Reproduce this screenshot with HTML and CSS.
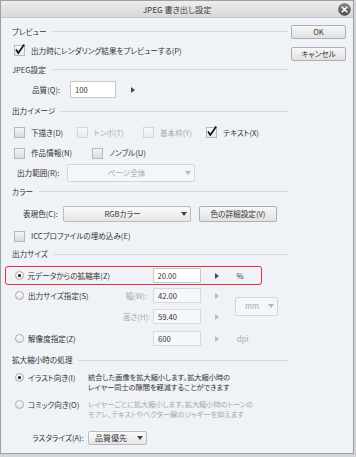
FILE: index.html
```html
<!DOCTYPE html>
<html lang="ja">
    <head>
        <meta charset="UTF-8" />
        <meta name="viewport" content="width=device-width, initial-scale=1.0" />
        <title>JPEG 書き出し設定</title>

        <link rel="stylesheet" href="styles.css">
    </head>
    <body>
        <div class="window">
            <div class="titlebar">
                <span class="title">JPEG 書き出し設定</span>
                <svg class="close" width="13" height="13" viewBox="0 0 13 13">
                    <defs>
                        <linearGradient id="closeFill" x1="0" y1="0" x2="0" y2="1">
                            <stop offset="0" stop-color="#8a8a8a" />
                            <stop offset="1" stop-color="#4e4e4e" />
                        </linearGradient>
                    </defs>
                    <circle cx="6.5" cy="6.5" r="6" fill="url(#closeFill)" stroke="#5a5a5a" stroke-width="0.6" />
                    <path d="M4.2 4.2 L8.8 8.8 M8.8 4.2 L4.2 8.8" stroke="#fff" stroke-width="1.6" stroke-linecap="round" />
                </svg>
            </div>

            <div class="content">
                <div class="settings">
                    <!-- プレビュー -->
                    <div class="group">プレビュー</div>
                    <div class="row row-preview">
                        <span class="chk">
                            <span class="cb on"><svg viewBox="0 0 11 11"><path d="M2 5.6 L4.3 9 L10.2 0.6" /></svg></span>
                            出力時にレンダリング結果をプレビューする(P)
                        </span>
                    </div>

                    <!-- JPEG設定 -->
                    <div class="group">JPEG設定</div>
                    <div class="row">
                        <span class="lbl-quality">品質(Q):</span>
                        <span class="field field-quality">100</span>
                        <span class="step step-quality"></span>
                    </div>

                    <!-- 出力イメージ -->
                    <div class="group group-tall">出力イメージ</div>
                    <div class="row checks">
                        <span class="chk w63"><span class="cb"></span>下描き(D)</span>
                        <span class="chk w66 off"><span class="cb"></span>トンボ(T)</span>
                        <span class="chk w63 off"><span class="cb"></span>基本枠(Y)</span>
                        <span class="chk">
                            <span class="cb on"><svg viewBox="0 0 11 11"><path d="M2 5.6 L4.3 9 L10.2 0.6" /></svg></span>
                            テキスト(X)
                        </span>
                    </div>
                    <div class="row row-20 checks">
                        <span class="chk w78"><span class="cb"></span>作品情報(N)</span>
                        <span class="chk"><span class="cb"></span>ノンブル(U)</span>
                    </div>
                    <div class="row row-20">
                        <span class="lbl-range">出力範囲(R):</span>
                        <span class="select select-range off">
                            <span class="select-text">ページ全体</span>
                            <span class="caret"></span>
                        </span>
                    </div>

                    <!-- カラー -->
                    <div class="group group-short">カラー</div>
                    <div class="row row-color">
                        <span class="lbl-color">表現色(C):</span>
                        <span class="select select-color">
                            <span class="select-text">RGBカラー</span>
                            <span class="caret"></span>
                        </span>
                        <span class="button button-color">色の詳細設定(V)</span>
                    </div>
                    <div class="row row-icc checks">
                        <span class="chk"><span class="cb"></span>ICCプロファイルの埋め込み(E)</span>
                    </div>

                    <!-- 出力サイズ -->
                    <div class="group group-mid">出力サイズ</div>
                    <div class="size-row size-active">
                        <span class="opt opt-active"><span class="radio on"></span>元データからの拡縮率(Z)</span>
                        <span class="field">20.00</span>
                        <span class="step"></span>
                        <span class="unit">%</span>
                    </div>
                    <div class="size-pair">
                        <div class="pair-rows">
                            <div class="size-row">
                                <span class="opt"><span class="radio"></span>出力サイズ指定(S)</span>
                                <span class="field-label">幅(W):</span>
                                <span class="field off">42.00</span>
                                <span class="step off"></span>
                            </div>
                            <div class="size-row">
                                <span class="opt"></span>
                                <span class="field-label">高さ(H):</span>
                                <span class="field off">59.40</span>
                                <span class="step off"></span>
                            </div>
                        </div>
                        <span class="select select-unit off">
                            <span class="select-text">mm</span>
                            <span class="caret"></span>
                        </span>
                    </div>
                    <div class="size-row size-last">
                        <span class="opt"><span class="radio"></span>解像度指定(Z)</span>
                        <span class="field-label"></span>
                        <span class="field off">600</span>
                        <span class="step off"></span>
                        <span class="unit off">dpi</span>
                    </div>

                    <!-- 拡大縮小時の処理 -->
                    <div class="group group-mid">拡大縮小時の処理</div>
                    <div class="mode mode-illust">
                        <span class="opt opt-mode"><span class="radio on"></span>イラスト向き(I)</span>
                        <span class="desc">統合した画像を拡大縮小します。拡大縮小時の<br>レイヤー同士の隙間を軽減することができます</span>
                    </div>
                    <div class="mode mode-comic">
                        <span class="opt opt-mode"><span class="radio"></span>コミック向き(O)</span>
                        <span class="desc off">レイヤーごとに拡大縮小します。拡大縮小時のトーンの<br>モアレ、テキストやベクター線のジャギーを抑えます</span>
                    </div>
                    <div class="row row-raster">
                        <span class="lbl-raster">ラスタライズ(A):</span>
                        <span class="select select-raster">
                            <span class="select-text">品質優先</span>
                            <span class="caret"></span>
                        </span>
                    </div>
                </div>

                <div class="actions">
                    <span class="button">OK</span>
                    <span class="button">キャンセル</span>
                </div>
            </div>
        </div>
    </body>
</html>
```

FILE: styles.css
```css
* {
    box-sizing: border-box;
}

body {
    margin: 0;
    background-color: #d3d5d9;
    font-family: "Noto Sans CJK JP", "Noto Sans", sans-serif;
    font-size: 7.6px;
    font-feature-settings: "palt";
    color: #333;
    line-height: 1;
}

.window {
    width: 354px;
    height: 454px;
    border: 1px solid #9aa0a8;
    background-color: #eff2f7;
}

.titlebar {
    height: 17px;
    display: grid;
    grid-template-columns: 1fr auto 1fr;
    align-items: center;
    background: linear-gradient(#ededed, #d8d8d8);
    border-bottom: 1px solid #c3c6cb;
}

.title {
    grid-column: 2;
    font-size: 8.2px;
    color: #444;
}

.close {
    grid-column: 3;
    justify-self: end;
    margin-right: 2px;
}

.content {
    display: flex;
    padding: 4px 0 0 11px;
}

.settings {
    width: 276px;
}

.actions {
    width: 55px;
    margin: 3px 0 0 3px;
    display: flex;
    flex-direction: column;
    gap: 8px;
}

/* group headers with the rule after them */
.group {
    height: 19px;
    display: flex;
    align-items: center;
    gap: 6px;
}

.group::after {
    content: "";
    flex: 1;
    height: 1px;
    background-color: #d4d8de;
}

.group-tall {
    height: 22px;
}

.group-short {
    height: 17px;
}

.group-mid {
    height: 20px;
}

.row {
    height: 21px;
    display: flex;
    align-items: center;
}

.row-preview {
    height: 19px;
    padding-left: 2px;
}

.row-20 {
    height: 20px;
}

.row-color {
    height: 28px;
}

.row-icc {
    height: 16px;
}

.row-raster {
    height: 14px;
    margin-top: 12px;
}

/* checkboxes */
.checks {
    padding-left: 2px;
}

.chk {
    display: flex;
    align-items: center;
    gap: 6px;
    white-space: nowrap;
}

.chk.off {
    color: #a6a9ae;
}

.w63 {
    width: 63px;
}

.w66 {
    width: 66px;
}

.w78 {
    width: 78px;
}

.cb {
    width: 11px;
    height: 11px;
    flex: none;
    border: 1px solid #b5b9bf;
    background: linear-gradient(#f3f4f6, #d9dce0);
}

.chk.off .cb {
    border-color: #d2d5da;
    background: linear-gradient(#f8f9fa, #e8eaed);
}

.cb.on {
    background: linear-gradient(#fbfbfb, #e6e7e9);
}

.cb svg {
    display: block;
    width: 11px;
    height: 11px;
    margin: -2px 0 0 -1px;
    overflow: visible;
    fill: none;
    stroke: #111;
    stroke-width: 1.7;
}

/* radios */
.radio {
    width: 9px;
    height: 9px;
    flex: none;
    border-radius: 50%;
    border: 1px solid #a7abb1;
    background: linear-gradient(#fdfdfd, #e3e5e9);
    display: grid;
    place-items: center;
}

.radio.on::after {
    content: "";
    width: 3px;
    height: 3px;
    border-radius: 50%;
    background-color: #111;
}

.opt {
    width: 108px;
    margin-left: 3px;
    display: flex;
    align-items: center;
    gap: 4px;
    white-space: nowrap;
}

/* inputs */
.field {
    width: 48px;
    height: 15px;
    display: flex;
    align-items: center;
    padding-left: 4px;
    border: 1px solid #c5c9cf;
    background-color: #fff;
}

.field.off {
    background-color: #f5f7fa;
    border-color: #d6dadf;
}

.field-quality {
    width: 46px;
    height: 17px;
}

.step {
    width: 0;
    height: 0;
    margin-left: 14px;
    border-left: 4px solid #4a4a4a;
    border-top: 3px solid transparent;
    border-bottom: 3px solid transparent;
}

.step.off {
    border-left-color: #b7bbc1;
}

.step-quality {
    margin-left: 15px;
}

.unit {
    margin-left: 18px;
}

.unit.off {
    color: #a6a9ae;
}

.lbl-quality {
    width: 38px;
    margin-left: 20px;
}

.lbl-range {
    width: 50px;
    margin-left: 5px;
}

.lbl-color {
    width: 40px;
    margin-left: 11px;
}

.lbl-raster {
    width: 56px;
    margin-left: 20px;
}

/* selects and buttons */
.select {
    display: flex;
    align-items: center;
    border: 1px solid #b8bbc0;
    border-radius: 2px;
    background: linear-gradient(#fafafa, #e6e6e6);
}

.select.off {
    border-color: #d3d6db;
    background: #f4f6f9;
    color: #a6a9ae;
}

.select-text {
    flex: 1;
    text-align: center;
}

.caret {
    width: 0;
    height: 0;
    margin-right: 3px;
    border-top: 4px solid #444;
    border-left: 3.5px solid transparent;
    border-right: 3.5px solid transparent;
}

.select.off .caret {
    border-top-color: #b3b7bd;
}

.select-range {
    width: 128px;
    height: 18px;
}

.select-color {
    width: 128px;
    height: 16px;
}

.select-raster {
    width: 59px;
    height: 14px;
}

.select-raster .select-text {
    text-align: left;
    padding-left: 6px;
    font-size: 8px;
}

.select-unit {
    width: 43px;
    height: 19px;
    margin-left: 16px;
}

.button {
    height: 14px;
    display: flex;
    align-items: center;
    justify-content: center;
    border: 1px solid #acafb4;
    border-radius: 2px;
    background: linear-gradient(#f7f7f7, #e1e1e1);
}

.button-color {
    width: 78px;
    height: 16px;
    margin-left: 8px;
}

/* 出力サイズ */
.size-row {
    height: 21px;
    display: flex;
    align-items: center;
}

.size-active {
    width: 257px;
    height: 19px;
    margin: 2px 0 0 -7px;
    padding-left: 8.5px;
    border: 1.5px solid #e0303b;
    border-radius: 3px;
}

.opt-active {
    width: 132px;
    margin-left: 0;
}

.size-active .field {
    margin-left: 6px;
}

.field-label {
    width: 24px;
    text-align: right;
    color: #a6a9ae;
    white-space: nowrap;
}

.field-label + .field {
    margin-left: 6px;
}

.size-pair {
    display: flex;
    align-items: center;
}

.size-last {
    height: 23px;
}

/* 拡大縮小時の処理 */
.mode {
    display: flex;
    line-height: 9.5px;
}

.mode-illust {
    margin-top: 3px;
}

.mode-comic {
    margin-top: 8px;
}

.opt-mode {
    width: 73px;
    height: 9.5px;
}

.desc {
    white-space: nowrap;
    font-size: 7.2px;
}

.desc.off {
    color: #a6a9ae;
}
```
